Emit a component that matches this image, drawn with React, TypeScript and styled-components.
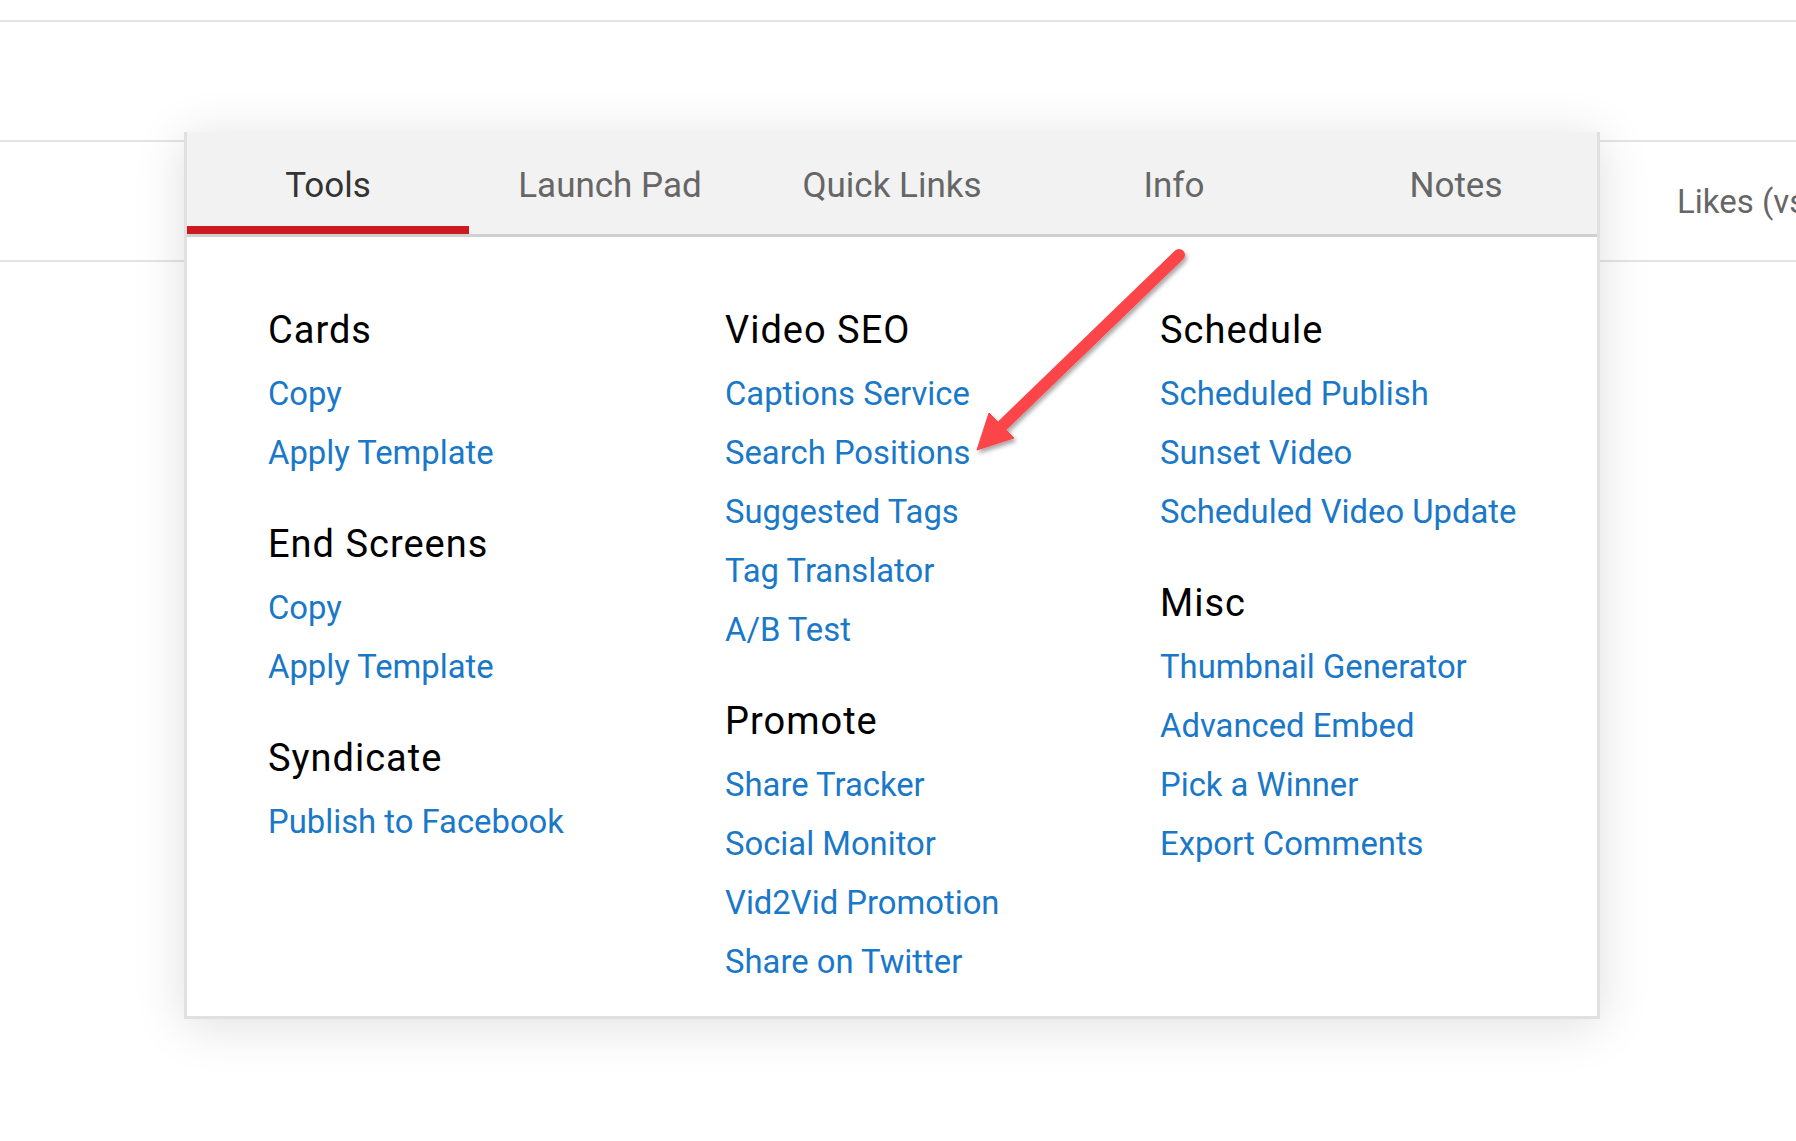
import React from 'react';
import styled, { createGlobalStyle } from 'styled-components';

const GlobalStyle = createGlobalStyle`
  html, body {
    margin: 0;
    padding: 0;
    background: #ffffff;
    overflow: hidden;
  }

  body {
    font-family: Roboto, 'Liberation Sans', Arial, sans-serif;
  }
`;

const Page = styled.div`
  position: relative;
  width: 1796px;
  height: 1141px;
  overflow: hidden;
  background: #ffffff;
`;

const TopBar = styled.div`
  height: 20px;
  border-bottom: 2px solid #e4e4e4;
`;

const HeaderRow = styled.div`
  display: flex;
  align-items: center;
  box-sizing: border-box;
  height: 122px;
  margin-top: 118px;
  padding-left: 1677px;
  border-top: 2px solid #e4e4e4;
  border-bottom: 2px solid #e4e4e4;
`;

const HeaderCell = styled.span`
  font-size: 33px;
  color: #666666;
  white-space: nowrap;
`;

const Dropdown = styled.div`
  position: absolute;
  left: 184px;
  top: 132px;
  width: 1416px;
  box-sizing: border-box;
  background: #ffffff;
  border: 3px solid #e0e0e0;
  border-top: none;
  box-shadow: 0 6px 48px rgba(0, 0, 0, 0.13);
`;

const TabBar = styled.div`
  display: grid;
  grid-template-columns: repeat(5, 282px);
  background: #f2f2f2;
  border-bottom: 3px solid #d0d0d0;
`;

const Tab = styled.div<{ $active?: boolean }>`
  display: flex;
  align-items: center;
  justify-content: center;
  box-sizing: border-box;
  height: 102px;
  padding-top: 12px;
  font-size: 35px;
  color: ${({ $active }) => ($active ? '#333333' : '#666666')};
  border-bottom: 8px solid ${({ $active }) => ($active ? '#cc1a21' : 'transparent')};
`;

const Content = styled.div`
  display: grid;
  grid-template-columns: 457px 435px 1fr;
  padding: 64px 0 24px 81px;
`;

const Column = styled.div`
  display: flex;
  flex-direction: column;
  gap: 32px;
`;

const Group = styled.div`
  display: flex;
  flex-direction: column;
`;

const GroupTitle = styled.h3`
  margin: 0 0 5px;
  font-size: 38px;
  line-height: 59px;
  font-weight: 400;
  letter-spacing: 1px;
  color: #000000;
`;

const ToolLink = styled.a`
  font-size: 32.8px;
  line-height: 59px;
  color: #1a78c8;
  text-decoration: none;
  white-space: nowrap;
`;

const Arrow = styled.svg`
  position: absolute;
  left: 950px;
  top: 230px;
  pointer-events: none;
`;

const tabs = ['Tools', 'Launch Pad', 'Quick Links', 'Info', 'Notes'];

const columns: { title: string; links: string[] }[][] = [
  [
    { title: 'Cards', links: ['Copy', 'Apply Template'] },
    { title: 'End Screens', links: ['Copy', 'Apply Template'] },
    { title: 'Syndicate', links: ['Publish to Facebook'] },
  ],
  [
    {
      title: 'Video SEO',
      links: ['Captions Service', 'Search Positions', 'Suggested Tags', 'Tag Translator', 'A/B Test'],
    },
    {
      title: 'Promote',
      links: ['Share Tracker', 'Social Monitor', 'Vid2Vid Promotion', 'Share on Twitter'],
    },
  ],
  [
    {
      title: 'Schedule',
      links: ['Scheduled Publish', 'Sunset Video', 'Scheduled Video Update'],
    },
    {
      title: 'Misc',
      links: ['Thumbnail Generator', 'Advanced Embed', 'Pick a Winner', 'Export Comments'],
    },
  ],
];

export default function App() {
  return (
    <Page>
      <GlobalStyle />
      <TopBar />
      <HeaderRow>
        <HeaderCell>Likes (vs. Dislikes)</HeaderCell>
      </HeaderRow>

      <Dropdown>
        <TabBar>
          {tabs.map((tab, i) => (
            <Tab key={tab} $active={i === 0}>
              {tab}
            </Tab>
          ))}
        </TabBar>

        <Content>
          {columns.map((groups, ci) => (
            <Column key={ci}>
              {groups.map((group) => (
                <Group key={group.title}>
                  <GroupTitle>{group.title}</GroupTitle>
                  {group.links.map((link) => (
                    <ToolLink key={link} href="#">
                      {link}
                    </ToolLink>
                  ))}
                </Group>
              ))}
            </Column>
          ))}
        </Content>
      </Dropdown>

      {/* annotation arrow pointing at Search Positions */}
      <Arrow width="260" height="240" viewBox="950 230 260 240">
        <defs>
          <filter id="arrowShadow" x="-20%" y="-20%" width="140%" height="140%">
            <feDropShadow dx="2" dy="3" stdDeviation="2" floodColor="#000" floodOpacity="0.35" />
          </filter>
        </defs>
        <g filter="url(#arrowShadow)" fill="#fb4448" stroke="#fb4448">
          <line x1="1179" y1="255" x2="1003" y2="425" strokeWidth="12" strokeLinecap="round" />
          <polygon points="977,450 989,413 999,423 1009,433 1014,438" strokeWidth="1" strokeLinejoin="round" />
        </g>
      </Arrow>
    </Page>
  );
}
